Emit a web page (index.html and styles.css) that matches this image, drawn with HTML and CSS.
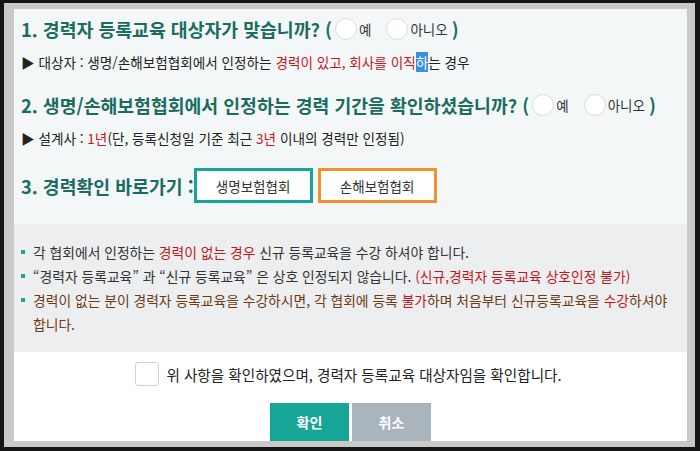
FILE: index.html
```html
<!DOCTYPE html>
<html lang="ko">
<head>
    <meta charset="UTF-8">
    <meta name="viewport" content="width=device-width, initial-scale=1.0">
    <title>경력자 등록교육 확인</title>
    <link rel="stylesheet" href="styles.css">
</head>
<body>
    <div class="frame">
        <div class="check-area">
            <h2 class="q">1. 경력자 등록교육 대상자가 맞습니까? (
                <label class="opt"><input type="radio" name="q1">예</label>
                <label class="opt"><input type="radio" name="q1">아니오</label> )
            </h2>
            <p class="desc">▶ 대상자 : 생명/손해보험협회에서 인정하는 <span class="red">경력이 있고, 회사를 이직<span class="sel">하</span></span>는 경우</p>

            <h2 class="q q2">2. 생명/손해보험협회에서 인정하는 경력 기간을 확인하셨습니까? (
                <label class="opt"><input type="radio" name="q2">예</label>
                <label class="opt"><input type="radio" name="q2">아니오</label> )
            </h2>
            <p class="desc">▶ 설계사 : <span class="red">1년</span>(단, 등록신청일 기준 최근 <span class="red">3년</span> 이내의 경력만 인정됨)</p>

            <div class="links">
                <h2 class="q">3. 경력확인 바로가기 :</h2>
                <button class="link life">생명보험협회</button>
                <button class="link nonlife">손해보험협회</button>
            </div>
        </div>

        <ul class="notice">
            <li>각 협회에서 인정하는 <span class="red">경력이 없는 경우</span> 신규 등록교육을 수강 하셔야 합니다.</li>
            <li>“경력자 등록교육” 과 “신규 등록교육” 은 상호 인정되지 않습니다. <span class="red">(신규,경력자 등록교육 상호인정 불가)</span></li>
            <li class="brown">경력이 없는 분이 경력자 등록교육을 수강하시면, 각 협회에 등록 <span class="red">불가</span>하며 처음부터 신규등록교육을 <span class="red">수강</span>하셔야 합니다.</li>
        </ul>

        <div class="agree-area">
            <label class="agree"><input type="checkbox" id="agree">위 사항을 확인하였으며, 경력자 등록교육 대상자임을 확인합니다.</label>
            <div class="actions">
                <button class="btn ok">확인</button>
                <button class="btn cancel">취소</button>
            </div>
        </div>
    </div>
</body>
</html>
```

FILE: styles.css
```css
* {
    box-sizing: border-box;
}
body {
    margin: 0;
    padding: 3px 5px 4px 4px;
    background-color: #151515;
    font-family: "Noto Sans CJK KR", "Noto Sans", sans-serif;
    color: #333;
}
.frame {
    border-style: solid;
    border-color: #c9c9c9;
    border-width: 6px 8px 6px 10px;
    height: 444px;
    display: flex;
    flex-direction: column;
}
.check-area {
    background-color: #f4f7f7;
    padding: 5px 7px 0;
    height: 215px;
    flex-shrink: 0;
}
.q {
    margin: 0;
    font-size: 18.3px;
    line-height: 30px;
    font-weight: bold;
    color: #1b6c60;
    display: flex;
    align-items: center;
    white-space: nowrap;
}
.opt {
    display: flex;
    align-items: center;
    font-size: 13.5px;
    font-weight: normal;
    color: #333;
    margin-left: 3px;
    margin-right: 12px;
}
.opt:last-child {
    margin-right: 4px;
}
.opt input {
    appearance: none;
    width: 22px;
    height: 22px;
    margin: 0 2px 0 0;
    border: 1px solid #dcdcdc;
    border-radius: 50%;
    background-color: #fff;
}
.desc {
    margin: 8px 0 0;
    font-size: 13.6px;
    line-height: 20px;
    color: #222;
}
.desc + .q2 {
    margin-top: 18px;
}
.red {
    color: #c4161c;
}
.sel {
    background-color: #3a8ee6;
    color: #fff;
}
.links {
    display: flex;
    align-items: center;
    margin-top: 20px;
}
.link {
    width: 119px;
    height: 35px;
    background-color: #fff;
    font-family: inherit;
    font-size: 13.5px;
    color: #333;
    border: 3px solid;
    cursor: pointer;
}
.life {
    border-color: #17a396;
    margin-left: 0;
}
.nonlife {
    border-color: #f0912e;
    margin-left: 5px;
}
.notice {
    list-style: none;
    margin: 0;
    padding: 16px 12px 16px 7px;
    background-color: #eceef0;
    font-size: 13.8px;
    line-height: 24px;
    word-break: keep-all;
    flex-shrink: 0;
}
.notice li {
    position: relative;
    padding-left: 12px;
}
.notice li::before {
    content: "";
    position: absolute;
    left: 0;
    top: 10px;
    width: 4px;
    height: 4px;
    background-color: #1aa89b;
}
.brown {
    color: #6e3a14;
}
.agree-area {
    flex: 1;
    background-color: #fff;
    display: flex;
    flex-direction: column;
    align-items: center;
    padding-top: 10px;
}
.agree {
    display: flex;
    align-items: center;
    font-size: 14.6px;
    color: #222;
    margin-right: 4px;
}
.agree input {
    appearance: none;
    width: 24px;
    height: 24px;
    margin: 0 7px 0 0;
    border: 1px solid #d0d0d0;
    border-radius: 3px;
    background-color: #fff;
}
.actions {
    display: flex;
    gap: 3px;
    margin-top: 17px;
}
.btn {
    width: 79px;
    height: 38px;
    border: none;
    font-family: inherit;
    font-size: 14px;
    font-weight: bold;
    color: #fff;
    cursor: pointer;
}
.ok {
    background-color: #16a596;
}
.cancel {
    background-color: #aab4bd;
}
```
